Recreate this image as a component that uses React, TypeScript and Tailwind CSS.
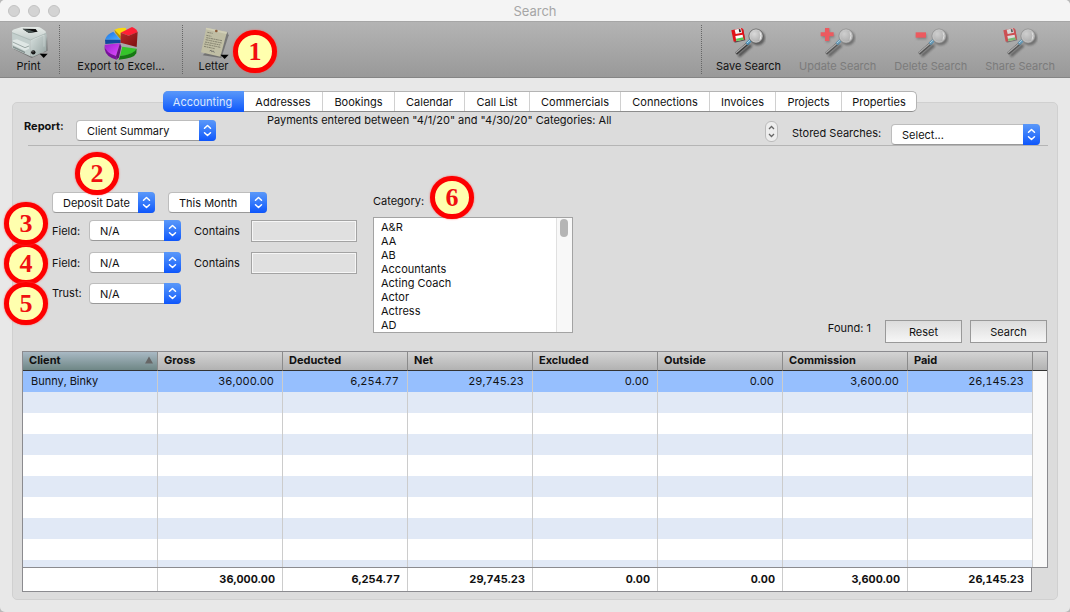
import React from 'react';

type Tone = 'save' | 'update' | 'delete' | 'share';

function PrinterIcon() {
  return (
    <svg width="38" height="34" viewBox="27 78 114 102" aria-hidden="true">
      <defs>
        <linearGradient id="prTop" x1="0" y1="0" x2="0" y2="1">
          <stop offset="0" stopColor="#e6ebe8" />
          <stop offset="1" stopColor="#c6d0ce" />
        </linearGradient>
        <linearGradient id="prSide" x1="0" y1="0" x2="1" y2="1">
          <stop offset="0" stopColor="#dbe4e2" />
          <stop offset="1" stopColor="#93a19f" />
        </linearGradient>
      </defs>
      <path d="M36 146 L92 174 L140 152 L138 108 L128 160 Z" fill="#000" opacity=".28" />
      <path d="M33 94 L88 116 L88 169 L34 144 Z" fill="#c3cfcd" />
      <path d="M88 116 L134 96 L137 104 L136 152 L96 170 L88 169 Z" fill="url(#prSide)" />
      <path d="M33 94 Q34 90 40 88 L62 81 L110 81 Q116 81 120 84 L134 94 L134 99 L92 117 L86 117 L33 97 Z" fill="url(#prTop)" />
      <path d="M65 86 L104 87 L110 95 L84 99 L73 92 Z" fill="#111" />
      <path d="M65 86 L73 92 L84 99 L100 96 L86 90 Z" fill="#4a5654" />
      <path d="M33 98 L88 120 L134 101" fill="none" stroke="#a3b0ae" strokeWidth="2" />
      <path d="M35 121 L48 118 L84 133 L84 146 L72 152 L35 134 Z" fill="#dfe7e5" />
      <path d="M35 126 L72 143 L84 138" fill="none" stroke="#8d9a98" strokeWidth="2.5" />
      <path d="M36 138 L72 155 L72 160 L36 143 Z" fill="#84918f" />
      <path d="M95 119 L129 105 L129 140" fill="none" stroke="#f3f8f6" strokeWidth="2" opacity=".5" />
      <circle cx="97" cy="157" r="6.5" fill="#161616" />
      <circle cx="96" cy="155" r="2" fill="#777" />
      <path d="M116 161 H140 L128 174 Z" fill="#000" />
    </svg>
  );
}

function PieIcon() {
  return (
    <svg width="36" height="34" viewBox="309 78 108 102" aria-hidden="true">
      <defs>
        <linearGradient id="pieRed" x1="0" y1="0" x2="1" y2="1">
          <stop offset="0" stopColor="#b52a2a" />
          <stop offset="1" stopColor="#7c1010" />
        </linearGradient>
        <linearGradient id="piePur" x1="0" y1="0" x2="1" y2="1">
          <stop offset="0" stopColor="#9c1fd0" />
          <stop offset="1" stopColor="#e04bff" />
        </linearGradient>
        <linearGradient id="pieBlue" x1="0" y1="0" x2="1" y2="1">
          <stop offset="0" stopColor="#1c6fe0" />
          <stop offset="1" stopColor="#4bb0ff" />
        </linearGradient>
      </defs>
      <path d="M343 89 Q358 82 378 84 L378 92 L362 100 L362 110 Z" fill="#f7d90f" />
      <path d="M343 89 L362 108 L362 119 L346 98 Z" fill="#b89500" />
      <path d="M315 119 Q320 102 340 95 L362 119 Z" fill="url(#pieBlue)" />
      <path d="M315 119 L362 119 L362 129 L316 132 Z" fill="#12479c" />
      <path d="M362 98 L396 81 Q410 86 413 97 L386 107 Z" fill="#ff1f35" />
      <path d="M362 98 L386 107 L413 96 L410 141 L362 128 Z" fill="url(#pieRed)" />
      <path d="M314 134 L360 130 L348 168 Q318 161 314 139 Z" fill="url(#piePur)" />
      <path d="M314 139 Q318 160 348 168 L350 179 Q318 172 314 148 Z" fill="#7a109c" />
      <path d="M360 130 L348 168 L350 179 L357 172 L364 140 Z" fill="#67107f" />
      <path d="M367 140 L410 146 Q406 162 360 168 Z" fill="#35c52a" />
      <path d="M360 168 Q402 163 410 146 L409 160 Q402 176 356 179 Z" fill="#157a12" />
    </svg>
  );
}

function LetterIcon() {
  return (
    <svg width="30" height="34" viewBox="597 78 90 102" aria-hidden="true">
      <path d="M608 166 L664 174 L686 106 L682 96 Z" fill="#000" opacity=".3" />
      <path d="M619 83 L681 96 L661 170 L603 157 Z" fill="#c0beA4" />
      <path d="M619 83 L681 96 L679 102 L617 88 Z" fill="#d0ceb6" />
      <circle cx="649" cy="93" r="4" fill="#8b5b38" />
      <g stroke="#6e6c5c" strokeWidth="2.2" fill="none" strokeDasharray="7 1.5 4 1.5">
        <path d="M622 97 L638 100" />
        <path d="M619 106 L634 109" />
        <path d="M619 113 L666 122" />
        <path d="M617 119 L665 129" />
        <path d="M615 126 L661 135" />
        <path d="M613 132 L661 142" />
        <path d="M612 139 L644 146" />
      </g>
      <path d="M629 153 q6 -6 6 2 q6 -6 8 3" stroke="#555" strokeWidth="2" fill="none" />
      <path d="M661 164 H686 L674 177 Z" fill="#000" />
    </svg>
  );
}

function SearchIcon({ tone }: { tone: Tone }) {
  const dim = tone !== 'save';
  const floppy = tone === 'save' || tone === 'share';
  return (
    <svg width="36" height="34" viewBox="120 78 108 102" aria-hidden="true">
      <defs>
        <radialGradient id={'lens' + tone} cx=".38" cy=".35" r=".8">
          <stop offset="0" stopColor="#dadada" />
          <stop offset=".6" stopColor="#b8b8b8" />
          <stop offset="1" stopColor="#959595" />
        </radialGradient>
        <filter id={'soft' + tone} x="-30%" y="-30%" width="160%" height="160%">
          <feGaussianBlur stdDeviation="3" />
        </filter>
      </defs>
      <g opacity={dim ? 0.75 : 1}>
        <g filter={'url(#soft' + tone + ')'} opacity=".6">
          <circle cx="203" cy="114" r="19" fill="#333" stroke="#222" strokeWidth="6" />
          <path d="M184 135 L146 168" stroke="#111" strokeWidth="9" />
        </g>
        <path d="M176 128 L138 161" stroke="#3a3a3a" strokeWidth="9" />
        <path d="M175 127 L137 159" stroke="#a9a9a9" strokeWidth="4" />
        <path d="M182 121 L170 132" stroke="#4b8db3" strokeWidth="10" />
        <path d="M181 120 L171 129" stroke="#b8e2f5" strokeWidth="3" />
        <circle cx="198" cy="108" r="21" fill={'url(#lens' + tone + ')'} stroke={dim ? '#7d7d7d' : '#5a5a5a'} strokeWidth="2.5" />
        <circle cx="198" cy="108" r="18.5" fill="none" stroke="#d6d6d6" strokeWidth="2" />
        <path d="M210 97 q6 10 0 22" stroke="#f2f2f2" strokeWidth="3" fill="none" />
      </g>
      {floppy && (
        <g opacity={dim ? 0.6 : 1}>
          <path d="M128 96 L134 128 L166 121 L160 90 Z" fill="#000" opacity=".5" />
          <path d="M124 91 L155 84 L160 88 L165 118 L131 125 Z" fill="#e01218" />
          <path d="M134 89 L153 85 L156 98 L137 102 Z" fill="#f6f6f6" />
          <path d="M146 88 L151 87 L153 96 L148 97 Z" fill="#222" />
          <path d="M136 108 L158 104 L160 119 L139 123 Z" fill="#fff" />
          <path d="M138 116 L160 112 L161 119 L139 123 Z" fill="#53c653" />
        </g>
      )}
      {tone === 'update' && (
        <g>
          <path d="M137 88 H150 V101 H163 V113 H150 V127 H137 V113 H126 V101 H137 Z" fill="#444" opacity=".4" filter="url(#softupdate)" />
          <path d="M135 84 H148 V97 H161 V109 H148 V123 H135 V109 H122 V97 H135 Z" fill="#ec5a5f" />
        </g>
      )}
      {tone === 'delete' && (
        <g>
          <rect x="131" y="102" width="30" height="16" fill="#444" opacity=".4" filter="url(#softdelete)" />
          <rect x="128" y="97" width="31" height="16" fill="#ec5a5f" />
        </g>
      )}
    </svg>
  );
}

function Select({ label, id, options, className }: { label?: string; id: string; options: string[]; className: string }) {
  return (
    <span className={'relative block shrink-0 ' + className}>
      <select
        id={id}
        aria-label={label}
        className="block h-[21px] w-full appearance-none rounded-[4px] border border-[#bdbdbd] border-b-[#999] bg-white pt-0.5 pl-2.5 pr-5 text-[11px] leading-[17px] text-[#111]"
      >
        {options.map((o) => (
          <option key={o}>{o}</option>
        ))}
      </select>
      <span className="pointer-events-none absolute inset-y-0 right-0 flex w-[17px] items-center justify-center rounded-r-[4px] bg-gradient-to-b from-[#5a98f9] to-[#0d55fb]">
        <svg width="9" height="13" viewBox="0 0 9 13" fill="none" stroke="#fff" strokeWidth="1.5" strokeLinecap="round" strokeLinejoin="round" aria-hidden="true">
          <path d="M1.5 4.3 L4.5 1.5 L7.5 4.3 M1.5 8.7 L4.5 11.5 L7.5 8.7" />
        </svg>
      </span>
    </span>
  );
}

function Callout({ n, className }: { n: number; className: string }) {
  return (
    <span
      className={
        'absolute z-10 flex h-[43px] w-[44px] items-center justify-center rounded-full border-[5px] border-[#fd0000] bg-[#ffffae] font-["Liberation_Serif",serif] text-[26px] leading-none font-bold text-[#f01010] shadow-[0_0_2px_#ff5050] ' +
        className
      }
    >
      {n}
    </span>
  );
}

const tabs = ['Accounting', 'Addresses', 'Bookings', 'Calendar', 'Call List', 'Commercials', 'Connections', 'Invoices', 'Projects', 'Properties'];
const columns = ['Client', 'Gross', 'Deducted', 'Net', 'Excluded', 'Outside', 'Commission', 'Paid'];
const rows = [['Bunny, Binky', '36,000.00', '6,254.77', '29,745.23', '0.00', '0.00', '3,600.00', '26,145.23']];
const totals = ['', '36,000.00', '6,254.77', '29,745.23', '0.00', '0.00', '3,600.00', '26,145.23'];
const categories = ['A&R', 'AA', 'AB', 'Accountants', 'Acting Coach', 'Actor', 'Actress', 'AD'];
const searchTools: { tone: Tone; text: string }[] = [
  { tone: 'save', text: 'Save Search' },
  { tone: 'update', text: 'Update Search' },
  { tone: 'delete', text: 'Delete Search' },
  { tone: 'share', text: 'Share Search' },
];

const toolClass = 'flex flex-col items-center pt-1 leading-3 whitespace-nowrap';
const buttonClass = 'h-[23px] w-[77px] border border-[#999] bg-gradient-to-b from-[#dcdcdc] to-[#f6f6f6]';

export default function App() {
  return (
    <div className="min-h-screen bg-[#b9b9b9]">
      <div className='flex min-h-screen flex-col overflow-hidden rounded-[5px] bg-[#e8e8e8] font-["Inter",sans-serif] text-[11px] leading-4 text-[#111]'>
        <header className="flex h-[21px] items-center bg-[#f4f4f4]">
          <div className="flex w-20 gap-2 pl-2">
            <span className="size-3 rounded-full border border-[#c2c2c2] bg-[#d3d3d3]" />
            <span className="size-3 rounded-full border border-[#c2c2c2] bg-[#d3d3d3]" />
            <span className="size-3 rounded-full border border-[#c2c2c2] bg-[#d3d3d3]" />
          </div>
          <h1 className="flex-1 text-center text-[13px] text-[#a6a6a6]">Search</h1>
          <div className="w-20" />
        </header>

        <div className="flex h-[57px] border-t border-b border-t-[#a6a6a6] border-b-[#858585] bg-gradient-to-b from-[#b4b4b4] to-[#999]">
          <button className={toolClass + ' w-[57px]'}>
            <PrinterIcon />
            Print
          </button>
          <span className="my-[3px] ml-0.5 border-l border-dotted border-[#666]" />
          <button className={toolClass + ' w-[122px]'}>
            <PieIcon />
            Export to Excel...
          </button>
          <span className="my-[3px] border-l border-dotted border-[#666]" />
          <div className="relative">
            <button className={toolClass + ' w-[61px]'}>
              <LetterIcon />
              Letter
            </button>
            <Callout n={1} className="top-2 left-[50px]" />
          </div>
          <span className="my-[3px] ml-auto border-l border-dotted border-[#666]" />
          <div className="flex gap-[18px] pr-[15px] pl-3.5">
            {searchTools.map((t) => (
              <button key={t.tone} disabled={t.tone !== 'save'} className={toolClass + ' disabled:text-[#7b7b7b]'}>
                <SearchIcon tone={t.tone} />
                {t.text}
              </button>
            ))}
          </div>
        </div>

        <div className="flex flex-1 flex-col px-3 pt-[13px] pb-3">
          <nav className="relative z-10 flex justify-center pl-2.5" aria-label="Sections">
            <div className="grid h-[21px] w-[754px] grid-cols-[80fr_78fr_72fr_70fr_65fr_91fr_89fr_66fr_66fr_75fr] rounded-[5px] border border-[#b4b4b4] border-b-[#8c8c8c] bg-white">
              {tabs.map((t, i) => (
                <button
                  key={t}
                  className={
                    i === 0
                      ? '-my-px -ml-px rounded-l-[5px] bg-gradient-to-b from-[#5a98f9] to-[#0d55fb] pr-0.5 text-[#dbe8ff]'
                      : i === 1
                        ? 'text-center'
                        : 'border-l border-[#d0d0d0] text-center'
                  }
                >
                  {t}
                </button>
              ))}
            </div>
          </nav>

          <main className="-mt-2.5 flex flex-1 flex-col rounded-[5px] border border-[#d0d0d0] bg-[#dcdcdc] px-[9px] pb-[7px]">
            <div className="flex h-[42px] items-start">
              <label htmlFor="report" className="mt-[15px] ml-0.5 w-[52px] font-bold">
                Report:
              </label>
              <Select id="report" options={['Client Summary']} className="mt-[17px] w-[140px]" />
              <p className="mt-[9px] ml-[51px] flex-1">Payments entered between "4/1/20" and "4/30/20" Categories: All</p>
              <button aria-label="Step" className="mt-[18px] flex h-[21px] w-[13px] items-center justify-center rounded-[6px] border border-[#bbb] bg-[#ededed]">
                <svg width="7" height="13" viewBox="0 0 7 13" fill="none" stroke="#666" strokeWidth="1.3" aria-hidden="true">
                  <path d="M1 4 L3.5 1.5 L6 4 M1 9 L3.5 11.5 L6 9" />
                </svg>
              </button>
              <label htmlFor="stored" className="mt-[22px] ml-3.5 w-[99px]">
                Stored Searches:
              </label>
              <Select id="stored" options={['Select...']} className="mt-[21px] mr-2 w-[149px]" />
            </div>
            <hr className="ml-1.5 border-[#b5b5b5]" />

            <div className="flex h-[197px] items-end">
              <div className="relative ml-[30px] h-[151px] w-[321px]">
                <div className="flex gap-[13px]">
                  <Select id="dateKind" label="Date type" options={['Deposit Date']} className="w-[103px]" />
                  <Select id="range" label="Date range" options={['This Month']} className="w-[99px]" />
                </div>
                {[1, 2].map((n) => (
                  <div key={n} className={n === 1 ? 'mt-[7px] flex items-start leading-[22px]' : 'mt-2.5 flex items-start leading-[22px]'}>
                    <label htmlFor={'field' + n} className="w-[37px]">
                      Field:
                    </label>
                    <Select id={'field' + n} options={['N/A']} className="w-[92px]" />
                    <label htmlFor={'contains' + n} className="ml-[13px] w-[57px]">
                      Contains
                    </label>
                    <input id={'contains' + n} className="h-[22px] w-[106px] border border-[#a3a3a3] bg-[#e0e0e0] px-1 shadow-[inset_0_0_0_1px_#f6f6f6]" />
                  </div>
                ))}
                <div className="mt-[9px] flex items-start leading-5">
                  <label htmlFor="trust" className="w-[37px]">
                    Trust:
                  </label>
                  <Select id="trust" options={['N/A']} className="w-[92px]" />
                </div>
                <Callout n={2} className="-top-[40px] left-[23px]" />
                <Callout n={4} className="top-[50px] -left-[48px]" />
                <Callout n={3} className="top-[10px] -left-[48px]" />
                <Callout n={5} className="top-[90px] -left-[48px]" />
              </div>

              <div className="relative mb-2.5 w-[200px]">
                <label htmlFor="category" className="mb-2 block">
                  Category:
                </label>
                <div className="flex h-[116px] border border-[#a3a3a3] bg-white">
                  <select id="category" multiple className="min-w-0 flex-1 overflow-hidden bg-white py-0 pt-0.5 pl-[7px] text-[11px] outline-none [scrollbar-width:none]">
                    {categories.map((c) => (
                      <option key={c} className="h-3.5 p-0 leading-[14px]">
                        {c}
                      </option>
                    ))}
                  </select>
                  <div className="w-4 border-l border-[#e0e0e0] bg-[#f8f8f8] pt-px">
                    <div className="ml-[3px] h-[18px] w-2 rounded-full bg-[#b5b5b5]" />
                  </div>
                </div>
                <Callout n={6} className="-top-[17px] left-[57px]" />
              </div>

              <div className="mr-px ml-auto flex gap-2">
                <span className="mr-1.5">Found: 1</span>
                <button className={buttonClass}>Reset</button>
                <button className={buttonClass}>Search</button>
              </div>
            </div>

            <div className="mt-2 h-[217px] overflow-hidden border border-[#8b8b8f] bg-white">
              <table className="w-full table-fixed border-separate border-spacing-0">
                <colgroup>
                  <col className="w-[135px]" />
                  <col span={7} />
                  <col className="w-[14px]" />
                </colgroup>
                <thead>
                  <tr className="h-[19px]">
                    {columns.map((c, i) => (
                      <th
                        key={c}
                        className={
                          i === 0
                            ? 'border-r border-b border-r-[#8b8b8b] border-b-[#333] bg-gradient-to-b from-[#a9b9c4] to-[#6f8786] p-0 px-1.5 pb-0.5 text-left leading-4'
                            : 'border-r border-b border-r-[#8b8b8b] border-b-[#333] bg-gradient-to-b from-[#d4d4d4] to-[#b2b2b2] p-0 px-1.5 pb-0.5 text-left leading-4'
                        }
                      >
                        {i === 0 ? (
                          <span className="flex items-center justify-between">
                            {c}
                            <svg width="8" height="8" viewBox="0 0 8 8" className="-mr-0.5" aria-hidden="true">
                              <path d="M4 0.5 L8 7.5 H0 Z" fill="#666" />
                            </svg>
                          </span>
                        ) : (
                          c
                        )}
                      </th>
                    ))}
                    <td className="border-b border-[#333] bg-gradient-to-b from-[#d4d4d4] to-[#b2b2b2] p-0" />
                  </tr>
                </thead>
                <tbody className="tabular-nums">
                  {Array.from({ length: 10 }, (_, r) => (
                    <tr key={r} className={r === 0 ? 'h-[21px] bg-[#96bffe]' : r % 2 ? 'h-[21px] bg-[#e1e9f6]' : 'h-[21px] bg-white'}>
                      {columns.map((c, i) => (
                        <td key={c} className={i === 0 ? 'border-r border-[#ccc] p-0 pb-0.5 pl-2' : 'border-r border-[#ccc] p-0 pr-2 pb-0.5 text-right'}>
                          {rows[r]?.[i]}
                        </td>
                      ))}
                      {r === 0 && <td rowSpan={10} className="bg-[#f9f9f9] p-0" />}
                    </tr>
                  ))}
                </tbody>
              </table>
            </div>
            <div className="mr-4 border border-t-0 border-[#8b8b8f] bg-white">
              <table className="w-full table-fixed border-separate border-spacing-0 tabular-nums">
                <colgroup>
                  <col className="w-[135px]" />
                  <col span={6} />
                  <col className="w-[123px]" />
                </colgroup>
                <tbody>
                  <tr className="h-[23px] font-bold">
                    {totals.map((t, i) => (
                      <td key={i} className="border-r border-[#ccc] p-0 pr-[7px] pb-0.5 text-right last:border-r-0">
                        {t}
                      </td>
                    ))}
                  </tr>
                </tbody>
              </table>
            </div>
          </main>
        </div>
      </div>
    </div>
  );
}
